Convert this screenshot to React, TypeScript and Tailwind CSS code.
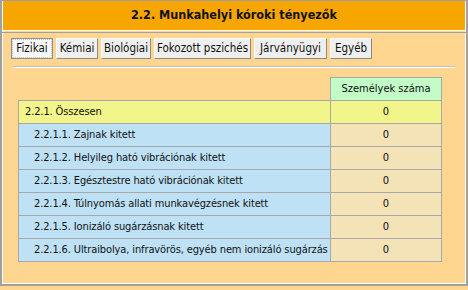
const rows = [
  { label: "2.2.1. Összesen", main: true },
  { label: "2.2.1.1. Zajnak kitett" },
  { label: "2.2.1.2. Helyileg ható vibrációnak kitett" },
  { label: "2.2.1.3. Egésztestre ható vibrációnak kitett" },
  { label: "2.2.1.4. Túlnyomás allati munkavégzésnek kitett" },
  { label: "2.2.1.5. Ionizáló sugárzásnak kitett" },
  { label: "2.2.1.6. Ultraibolya, infravörös, egyéb nem ionizáló sugárzás" },
];

const tabs = [
  { label: "Fizikai", w: "w-[42px]", active: true },
  { label: "Kémiai", w: "w-[42px]" },
  { label: "Biológiai", w: "w-[50px]" },
  { label: "Fokozott pszichés", w: "w-[97px]" },
  { label: "Járványügyi", w: "w-[73px]" },
  { label: "Egyéb", w: "w-[42px]" },
];

export default function App() {
  return (
    <div className="w-[468px] h-[290px] bg-[#FED690] font-['DejaVu_Sans_Condensed','DejaVu_Sans',sans-serif] text-[11px] text-[#111]">
      <div className="h-[286px] border-t border-x-2 border-b-2 border-[#a0a0a0] flex flex-col">
        <div className="h-[31px] shrink-0 border-x border-white">
          <div className="h-[30px] bg-[#F7A500] border-b border-white flex items-center justify-center font-bold text-[12.5px]">
            2.2. Munkahelyi kóroki tényezők
          </div>
        </div>
        <div className="flex-1 border-t border-[#a0a0a0]">
          <div className="h-full border-x border-b border-white pl-[8px] pt-[5px]">
            <div className="flex gap-[3px]">
              {tabs.map((t) => (
                <div
                  key={t.label}
                  className={`${t.w} h-[21px] flex items-center justify-center border text-[11.5px] ${
                    t.active
                      ? "bg-[#f7f7f7] border-[#8f8f8f] outline outline-1 -outline-offset-2 outline-dotted outline-[#c8c8c8]"
                      : "bg-[#efefef] border-t-white border-l-white border-r-[#8a8a8a] border-b-[#8a8a8a]"
                  }`}
                >
                  {t.label}
                </div>
              ))}
            </div>
            <div className="ml-[2px] mr-[1px] mt-[7px] h-[2px] border-t border-[#c0c0c0] border-b border-b-white w-[442px]" />
            <div className="ml-[7px] mt-[9px] w-[424px]">
              <div className="flex">
                <div className="w-[312px]" />
                <div className="w-[112px] h-[23px] bg-[#C2FCC6] border-t border-l border-r border-[#a8a8a8] border-b-0 flex items-center justify-center">
                  Személyek száma
                </div>
              </div>
              <div className="border-b border-[#a8a8a8]">
                {rows.map((r) => (
                  <div key={r.label} className="flex h-[23px] border-t border-[#a8a8a8]">
                    <div
                      className={`w-[312px] border-l border-[#a8a8a8] flex items-center whitespace-nowrap overflow-hidden tracking-[-0.12px] ${
                        r.main ? "bg-[#F2F68A] pl-[6px]" : "bg-[#BEE1F6] pl-[15px]"
                      }`}
                    >
                      {r.label}
                    </div>
                    <div
                      className={`w-[112px] border-l border-r border-[#a8a8a8] flex items-center justify-center ${
                        r.main ? "bg-[#F2F68A]" : "bg-[#F3E3B6]"
                      }`}
                    >
                      0
                    </div>
                  </div>
                ))}
              </div>
            </div>
          </div>
        </div>
      </div>
    </div>
  );
}
